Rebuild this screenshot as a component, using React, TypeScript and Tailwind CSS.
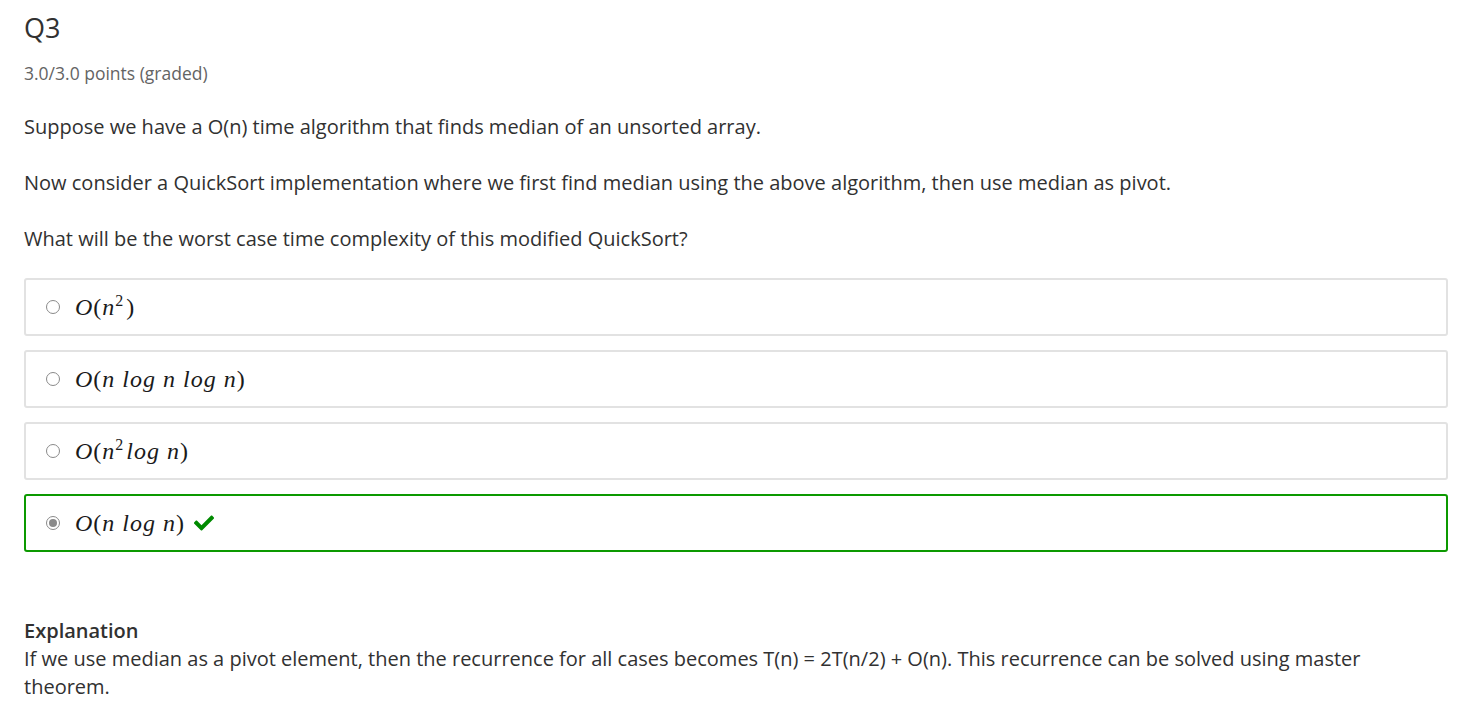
import { FaCheck } from "react-icons/fa"

type Choice = { id: string; checked?: boolean; correct?: boolean; math: React.ReactNode }

const M = ({ children }: { children: React.ReactNode }) => (
  <i className="italic">{children}</i>
)

const Sq = () => (
  <sup className="not-italic text-[16px] align-baseline relative -top-[9px] mr-[2px]">2</sup>
)

const choices: Choice[] = [
  {
    id: "a",
    math: (
      <>
        <M>O</M>(<M>n</M>
        <Sq />)
      </>
    ),
  },
  {
    id: "b",
    math: (
      <>
        <M>O</M>(<M>n</M> <M>log</M> <M>n</M> <M>log</M> <M>n</M>)
      </>
    ),
  },
  {
    id: "c",
    math: (
      <>
        <M>O</M>(<M>n</M>
        <Sq />
        <M>log</M> <M>n</M>)
      </>
    ),
  },
  {
    id: "d",
    checked: true,
    correct: true,
    math: (
      <>
        <M>O</M>(<M>n</M> <M>log</M> <M>n</M>)
      </>
    ),
  },
]

function Radio({ checked }: { checked?: boolean }) {
  return (
    <span className="w-[14px] h-[14px] rounded-full border border-[#8a8a8a] bg-white flex items-center justify-center shrink-0">
      {checked && <span className="w-[8px] h-[8px] rounded-full bg-[#8a8a8a]" />}
    </span>
  )
}

export default function App() {
  return (
    <main className="w-full min-h-[100vh] bg-white pl-6 pr-4 text-[#313131] font-['Open_Sans',sans-serif]">
      <h2 className="pt-3 text-[27px] leading-[32px] font-normal">Q3</h2>
      <div className="mt-[19px] text-[17.5px] leading-[20px] text-[#646464]">3.0/3.0 points (graded)</div>

      <p className="mt-[30px] text-[20px] leading-[28px]">
        Suppose we have a O(n) time algorithm that finds median of an unsorted array.
      </p>
      <p className="mt-[28px] text-[20px] leading-[28px]">
        Now consider a QuickSort implementation where we first find median using the above algorithm, then use median as pivot.
      </p>
      <p className="mt-[28px] text-[20px] leading-[28px]">
        What will be the worst case time complexity of this modified QuickSort?
      </p>

      <div className="mt-[25px] flex flex-col gap-[14px]">
        {choices.map((c) => (
          <label
            key={c.id}
            className={`h-[58px] flex items-center gap-[15px] pl-[20px] pr-4 rounded-[3px] border-2 ${
              c.correct ? "border-[#0c9900]" : "border-[#e2e2e2]"
            }`}
          >
            <Radio checked={c.checked} />
            <span className="flex items-center gap-[9px] text-[24px] leading-none text-[#1a1a1a] font-['Liberation_Serif',serif]">
              <span className="tracking-[1px]">{c.math}</span>
              {c.correct && <FaCheck className="w-[20px] h-[20px] text-[#008a00]" />}
            </span>
          </label>
        ))}
      </div>

      <div className="mt-[65px] text-[20px] leading-[28px]">
        <div className="font-semibold">Explanation</div>
        <p>
          If we use median as a pivot element, then the recurrence for all cases becomes T(n) = 2T(n/2) + O(n). This recurrence can be solved using master theorem.
        </p>
      </div>
    </main>
  )
}
